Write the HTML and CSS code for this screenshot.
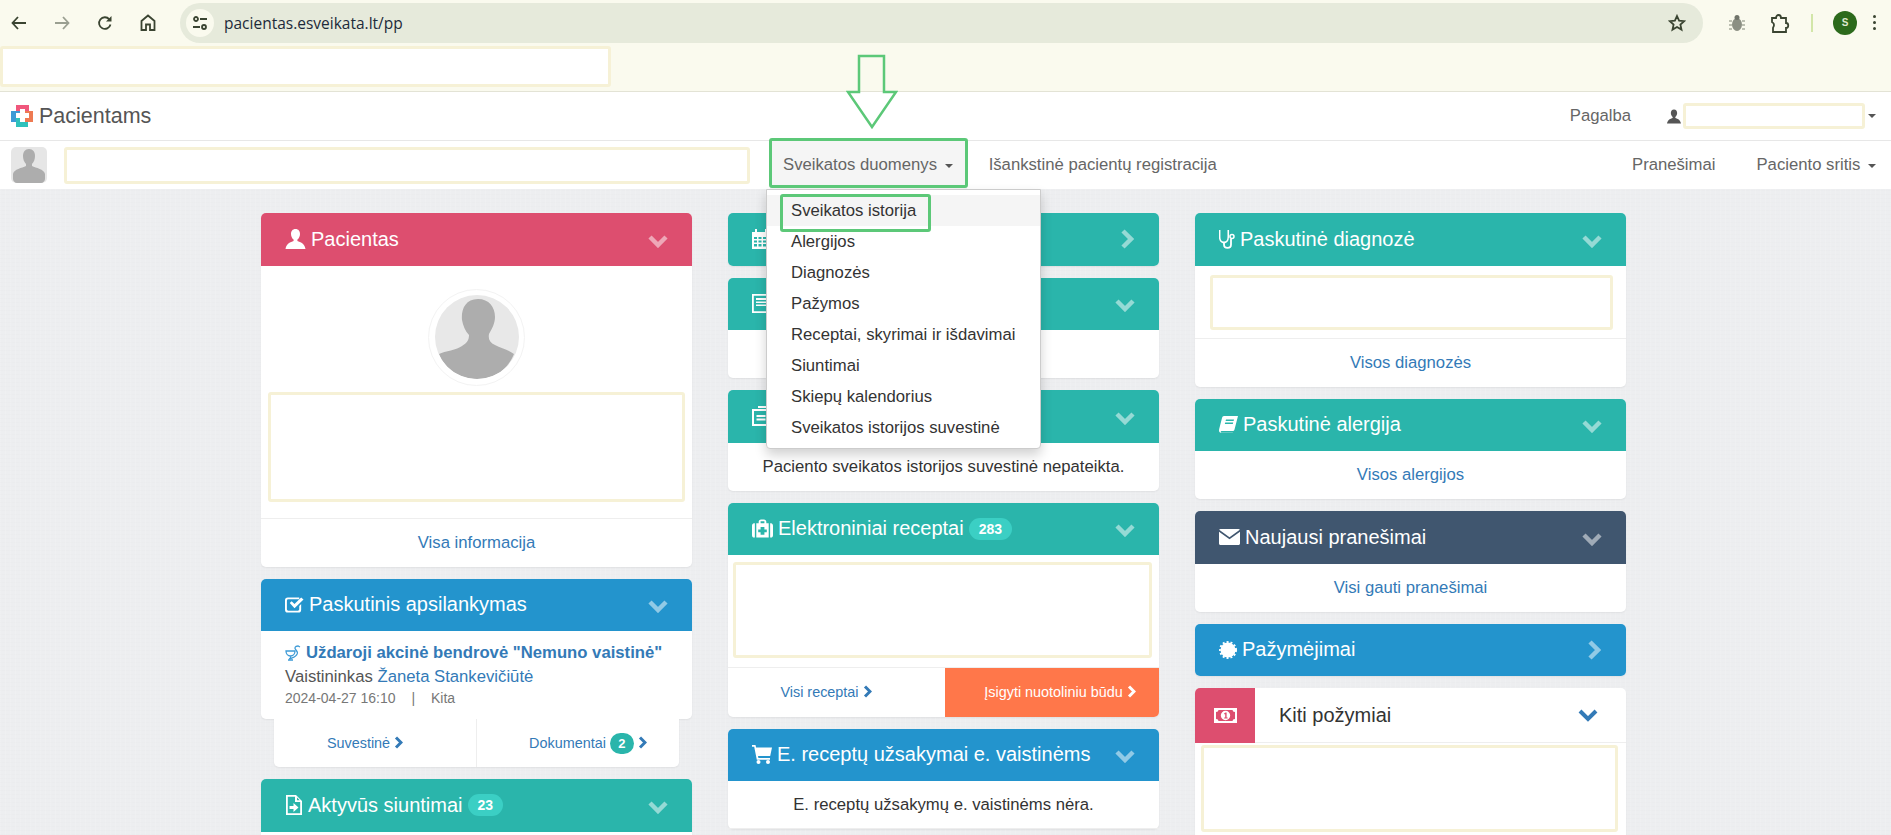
FILE: index.html
```html
<!DOCTYPE html>
<html lang="lt">
<head>
    <meta charset="UTF-8">
    <meta name="viewport" content="width=device-width, initial-scale=1.0">
    <title>Pacientams</title>
    <link rel="stylesheet" href="styles.css">
</head>
<body>
    <svg class="defs">
        <symbol id="i-user" viewBox="0 0 20 20"><path d="M10 0C7 0 5.500 2.300 5.500 5c0 2.500 1.200 4.600 2.600 5.600V12C5 13 1 14.500 0 20h20c-1-5.500-5-7-8.100-8v-1.400c1.400-1 2.600-3.100 2.600-5.600C14.500 2.300 13 0 10 0z"/></symbol>
        <symbol id="i-check" viewBox="0 0 20 18"><path d="M3 1h12v2H3.500A1.500 1.500 0 0 0 2 4.500v9A1.500 1.500 0 0 0 3.500 15h10a1.500 1.500 0 0 0 1.500-1.500V10l2-2v6a3 3 0 0 1-3 3H3a3 3 0 0 1-3-3V4a3 3 0 0 1 3-3z"/><path d="M5 7l2-2 3 3 7-7 2.500 2.200L10 12.500z"/></symbol>
        <symbol id="i-file" viewBox="0 0 18 20"><path d="M1 0h10l6 6v14H1zm1.800 1.800v16.400h12.400V7H10V1.800zM12 2.500V5.200h2.800z"/><path d="M4.500 11h4V8l5 4.500-5 4.500v-3h-4z"/></symbol>
        <symbol id="i-kit" viewBox="0 0 22 20"><path d="M7 4V2.500C7 1 8 0 9.500 0h3C14 0 15 1 15 2.500V4h-2V2H9v2zM0 6.500C0 5 1 4 2 4h1v15H2c-1 0-2-1-2-2.500zM19 4h1c1 0 2 1 2 2.500v10c0 1.500-1 2.500-2 2.500h-1zM4.500 4h13v15h-13zm4.500 4v2.500H6.500v3H9V16h4v-2.500h2.500v-3H13V8z" fill-rule="evenodd"/></symbol>
        <symbol id="i-cart" viewBox="0 0 20 19"><path d="M0 0h3.500l.6 2.500H20l-1.800 8.500H6l.4 2h11.600v1.800H4.800L2.200 1.800H0z"/><circle cx="6.500" cy="17" r="2"/><circle cx="16" cy="17" r="2"/></symbol>
        <symbol id="i-steth" viewBox="0 0 16 20"><path d="M1 1v7c0 3.500 2.500 5.500 5 5.500S11 11.500 11 8V1" transform="translate(-.2 0) scale(.86 1)" fill="none" stroke="currentColor" stroke-width="1.800"/><path d="M5 13v2.500c0 2 1.500 3.400 3.500 3.400s3.500-1.400 3.500-3.400V10" fill="none" stroke="currentColor" stroke-width="1.800"/><circle cx="13" cy="7.500" r="2" fill="none" stroke="currentColor" stroke-width="1.500"/></symbol>
        <symbol id="i-book" viewBox="0 0 19 17"><path d="M5 0h14l-3.500 13.500c-.3 1-1 1.500-2 1.500H3c-.8 0-1.300.4-1.300 .9s.5 .8 1.300 .8h11l-.3 .3H2.500C1 17 0 16 0 14.500c0-.5.100-1 .2-1.400L3 2c.3-1.200 1-2 2-2zm2 3.500l-.4 1.500h8l.4-1.500zm-.8 3l-.4 1.500h8l.4-1.500z" fill-rule="evenodd"/></symbol>
        <symbol id="i-mail" viewBox="0 0 21 16"><path d="M1.500 0h18c.6 0 1.100.3 1.300.8L10.500 8.200.2.800C.4.300.9 0 1.500 0zM0 2.800l10.500 7.500L21 2.800v11.700c0 .8-.7 1.500-1.500 1.500h-18C.7 16 0 15.300 0 14.500z"/></symbol>
        <symbol id="i-money" viewBox="0 0 23 15"><path d="M0 0h23v15H0zm4.500 2Q4.500 4 2 4v7q2.500 0 2.500 2h14q0-2 2.500-2V4q-2.500 0-2.500-2zm7 .8a4.700 4.700 0 1 1 0 9.400 4.700 4.700 0 0 1 0-9.400zM10.200 5.200v1h1v3.400h-1v1h3.400v-1h-1V4.600h-1z" fill-rule="evenodd"/></symbol>
        <symbol id="i-silhouette" viewBox="0 0 84 84"><path d="M4 59C10 56 22 55 27 51C32 48 34 45 34 40C30 36 28 30 27 25C26 15 30 4 43 4C54 4 60 12 60 22C60 28 57 34 54 39C53 44 55 48 60 50C66 53 74 55 79 59C73 74 60 84 42 84C25 84 10 74 4 59z"/></symbol>
        <symbol id="i-newspaper" viewBox="0 0 18 19"><path d="M0 0h18v19H0zm1.800 1.800v15.400h14.400V1.800zM4 4h10v2H4zm0 3.500h10v1.500H4zm0 3h10V12H4z" fill-rule="evenodd"/></symbol>
        <symbol id="i-chart" viewBox="0 0 18 20"><path d="M3 3h11v2H2v13h13v-7h2v9H0V3zM4.500 9h9v2h-9zm0 3.500h9v2h-9z"/><path d="M6 0h12v9h-2V2H6z"/></symbol>
        <symbol id="i-cal" viewBox="0 0 18 20"><path d="M0 3h3V0h2v3h8V0h2v3h3v17H0zm2 5v2h3V8zm4.500 0v2h3V8zm4.500 0v2h4V8zM2 11.500v2h3v-2zm4.500 0v2h3v-2zm4.500 0v2h4v-2zM2 15v2.500h3V15zm4.500 0v2.500h3V15zm4.500 0v2.500h4V15z" fill-rule="evenodd"/></symbol>
    </svg>

    <header class="toolbar">
        <span class="tool"><svg width="16" height="14" viewBox="0 0 16 14"><path d="M7 1L1.500 7 7 13M2 7h13" class="line"/></svg></span>
        <span class="tool tool-off"><svg width="16" height="14" viewBox="0 0 16 14"><path d="M9 1l5.500 6L9 13M14 7H1" class="line"/></svg></span>
        <span class="tool"><svg width="16" height="16" viewBox="0 0 16 16"><path d="M13.500 9.500a5.800 5.800 0 1 1-1.200-5.200" class="line"/><path d="M14.500 1v5.500H9z" fill="#3a4431"/></svg></span>
        <span class="tool"><svg width="16" height="17" viewBox="0 0 16 17"><path d="M1.500 7L8 1.500 14.500 7v9h-4.500v-5.500H6V16H1.500z" class="line"/></svg></span>
        <div class="omnibox">
            <span class="site-info"><svg width="16" height="14" viewBox="0 0 16 14"><circle cx="4" cy="3" r="2" class="line"/><path d="M8 3h7M1 11h7" class="line"/><circle cx="12" cy="11" r="2" class="line"/></svg></span>
            <span class="url">pacientas.esveikata.lt/pp</span>
            <svg class="star" width="18" height="18" viewBox="0 0 18 18"><path d="M9 2l2.100 4.700 5.100.5-3.800 3.400 1.100 5L9 13l-4.500 2.600 1.100-5-3.800-3.400 5.100-.5z" class="line"/></svg>
        </div>
        <svg class="bug" width="18" height="18" viewBox="0 0 18 18"><ellipse cx="9" cy="10.500" rx="5" ry="6.500" fill="#8b8f83"/><circle cx="9" cy="3.500" r="2.500" fill="#70746a"/><path d="M1 7h3M1 11h3M1 15h3M14 7h3M14 11h3M14 15h3" stroke="#a9ad9f" stroke-width="1.500"/></svg>
        <svg class="puzzle" width="20" height="20" viewBox="0 0 20 20"><path d="M2 5h4c0-4 5-4 5 0h5v5c3 0 3 5 0 5v4H3v-4c0-1 1-1 1-3s-1-2-2-3z" class="line"/></svg>
        <span class="tool-sep"></span>
        <span class="account">s</span>
        <span class="dots"><i></i><i></i><i></i></span>
    </header>

    <div class="infobar">
        <div class="hidden-box hidden-info"></div>
    </div>

    <nav class="topnav">
        <svg class="logo" width="22" height="22" viewBox="0 0 22 22">
            <rect x="5" y="0" width="13" height="11" fill="#f0577c"/>
            <rect x="0" y="6" width="10" height="11" fill="#3d9ad6"/>
            <rect x="5" y="12" width="12" height="10" fill="#2fc1bb"/>
            <rect x="12" y="6" width="10" height="11" fill="#ee7a52"/>
            <path d="M9 4h5v4h4v5h-4v4H9v-4H5V8h4z" fill="#fff"/>
        </svg>
        <span class="brand">Pacientams</span>
        <a class="nav-link help">Pagalba</a>
        <svg class="person" width="14" height="15"><use href="#i-user"></use></svg>
        <div class="hidden-box hidden-user"></div>
        <span class="caret"></span>
    </nav>

    <nav class="subnav">
        <svg class="mini-avatar" width="36" height="36" viewBox="0 0 36 36">
            <rect width="36" height="36" rx="5" fill="#e6e6e6"/>
            <path d="M18 2c4 0 6 3 6 7 0 3-1 6-3 8v2c4 2 12 3 13 8v5c0 2-2 4-4 4H6c-2 0-4-2-4-4v-5c1-5 9-6 13-8v-2c-2-2-3-5-3-8 0-4 2-7 6-7z" fill="#adadad"/>
        </svg>
        <div class="hidden-box hidden-patient"></div>
        <div class="nav-drop">
            <a class="nav-link drop-link">Sveikatos duomenys <span class="caret"></span></a>
            <ul class="menu">
                <li class="menu-current">Sveikatos istorija</li>
                <li>Alergijos</li>
                <li>Diagnozės</li>
                <li>Pažymos</li>
                <li>Receptai, skyrimai ir išdavimai</li>
                <li>Siuntimai</li>
                <li>Skiepų kalendorius</li>
                <li>Sveikatos istorijos suvestinė</li>
            </ul>
        </div>
        <a class="nav-link reg-link">Išankstinė pacientų registracija</a>
        <a class="nav-link msg-link">Pranešimai</a>
        <a class="nav-link area-link">Paciento sritis <span class="caret"></span></a>
    </nav>

    <main class="columns">
        <section class="column">
            <div class="card">
                <div class="card-head pink">
                    <svg class="icon" width="21" height="20"><use href="#i-user"></use></svg>
                    <span class="card-title">Pacientas</span>
                    <svg class="chev" width="20" height="14" viewBox="0 0 20 14"><path d="M2 3l8 8 8-8"/></svg>
                </div>
                <div class="patient-body">
                    <div class="avatar-ring">
                        <div class="avatar"><svg width="84" height="84" class="avatar-shape"><use href="#i-silhouette"></use></svg></div>
                    </div>
                    <div class="hidden-box hidden-patient-info"></div>
                </div>
                <a class="card-foot">Visa informacija</a>
            </div>

            <div class="card-group">
                <div class="card">
                    <div class="card-head blue">
                        <svg class="icon" width="19" height="18"><use href="#i-check"></use></svg>
                        <span class="card-title">Paskutinis apsilankymas</span>
                        <svg class="chev" width="20" height="14" viewBox="0 0 20 14"><path d="M2 3l8 8 8-8"/></svg>
                    </div>
                    <div class="visit">
                        <div class="visit-place">
                            <svg width="16" height="17" viewBox="0 0 16 17"><path d="M1 6h9c0 3-2 5-4.500 5S1 9 1 6zM5.500 11v3M3 15h5" fill="none" stroke="#3d9ad6" stroke-width="1.300"/><path d="M4 14C12 12 14 8 11 5C9 3 10 1 13 1l2 1" fill="none" stroke="#3d9ad6" stroke-width="1.300"/></svg>
                            <a>Uždaroji akcinė bendrovė "Nemuno vaistinė"</a>
                        </div>
                        <div class="visit-doc">Vaistininkas <a>Žaneta Stankevičiūtė</a></div>
                        <div class="visit-meta">2024-04-27 16:10 <span class="meta-sep">|</span> Kita</div>
                    </div>
                </div>
                <div class="sub-row">
                    <a class="sub-link sub-summary">Suvestinė <svg class="chev-small" width="9" height="13" viewBox="0 0 9 13"><path d="M2 1.500l5 5-5 5"/></svg></a>
                    <a class="sub-link sub-docs">Dokumentai <span class="count">2</span> <svg class="chev-small" width="9" height="13" viewBox="0 0 9 13"><path d="M2 1.500l5 5-5 5"/></svg></a>
                </div>
            </div>

            <div class="card">
                <div class="card-head teal">
                    <svg class="icon" width="18" height="20"><use href="#i-file"></use></svg>
                    <span class="card-title">Aktyvūs siuntimai</span>
                    <span class="badge">23</span>
                    <svg class="chev" width="20" height="14" viewBox="0 0 20 14"><path d="M2 3l8 8 8-8"/></svg>
                </div>
                <div class="card-rest"></div>
            </div>
        </section>

        <section class="column">
            <div class="card">
                <div class="card-head teal head-only">
                    <svg class="icon" width="18" height="20"><use href="#i-cal"></use></svg>
                    <svg class="chev chev-right" width="14" height="20" viewBox="0 0 14 20"><path d="M3 2l8 8-8 8"/></svg>
                </div>
            </div>
            <div class="card">
                <div class="card-head teal">
                    <svg class="icon" width="18" height="19"><use href="#i-newspaper"></use></svg>
                    <svg class="chev" width="20" height="14" viewBox="0 0 20 14"><path d="M2 3l8 8 8-8"/></svg>
                </div>
                <div class="empty-body"></div>
            </div>
            <div class="card">
                <div class="card-head teal">
                    <svg class="icon" width="18" height="20"><use href="#i-chart"></use></svg>
                    <svg class="chev" width="20" height="14" viewBox="0 0 20 14"><path d="M2 3l8 8 8-8"/></svg>
                </div>
                <p class="card-text text-summary">Paciento sveikatos istorijos suvestinė nepateikta.</p>
            </div>
            <div class="card">
                <div class="card-head teal">
                    <svg class="icon" width="21" height="20"><use href="#i-kit"></use></svg>
                    <span class="card-title">Elektroniniai receptai</span>
                    <span class="badge">283</span>
                    <svg class="chev" width="20" height="14" viewBox="0 0 20 14"><path d="M2 3l8 8 8-8"/></svg>
                </div>
                <div class="rx-body">
                    <div class="hidden-box hidden-rx"></div>
                </div>
                <div class="rx-foot">
                    <a class="rx-link">Visi receptai <svg class="chev-small" width="9" height="13" viewBox="0 0 9 13"><path d="M2 1.500l5 5-5 5"/></svg></a>
                    <a class="rx-buy">Įsigyti nuotoliniu būdu <svg class="chev-small" width="9" height="13" viewBox="0 0 9 13"><path d="M2 1.500l5 5-5 5"/></svg></a>
                </div>
            </div>
            <div class="card">
                <div class="card-head blue">
                    <svg class="icon" width="20" height="19"><use href="#i-cart"></use></svg>
                    <span class="card-title">E. receptų užsakymai e. vaistinėms</span>
                    <svg class="chev" width="20" height="14" viewBox="0 0 20 14"><path d="M2 3l8 8 8-8"/></svg>
                </div>
                <p class="card-text text-orders">E. receptų užsakymų e. vaistinėms nėra.</p>
            </div>
        </section>

        <section class="column">
            <div class="card">
                <div class="card-head teal">
                    <svg class="icon" width="16" height="20"><use href="#i-steth"></use></svg>
                    <span class="card-title">Paskutinė diagnozė</span>
                    <svg class="chev" width="20" height="14" viewBox="0 0 20 14"><path d="M2 3l8 8 8-8"/></svg>
                </div>
                <div class="diag-body">
                    <div class="hidden-box hidden-diag"></div>
                </div>
                <a class="card-foot">Visos diagnozės</a>
            </div>
            <div class="card">
                <div class="card-head teal">
                    <svg class="icon" width="19" height="17"><use href="#i-book"></use></svg>
                    <span class="card-title">Paskutinė alergija</span>
                    <svg class="chev" width="20" height="14" viewBox="0 0 20 14"><path d="M2 3l8 8 8-8"/></svg>
                </div>
                <a class="card-foot no-line">Visos alergijos</a>
            </div>
            <div class="card">
                <div class="card-head navy">
                    <svg class="icon" width="21" height="16"><use href="#i-mail"></use></svg>
                    <span class="card-title">Naujausi pranešimai</span>
                    <svg class="chev" width="20" height="14" viewBox="0 0 20 14"><path d="M2 3l8 8 8-8"/></svg>
                </div>
                <a class="card-foot no-line">Visi gauti pranešimai</a>
            </div>
            <div class="card">
                <div class="card-head blue head-only">
                    <svg class="icon" width="18" height="18" viewBox="0 0 18 18"><circle cx="9" cy="9" r="7.500"/><circle cx="9" cy="9" r="8" fill="none" stroke="#fff" stroke-width="2" stroke-dasharray="2 2"/></svg>
                    <span class="card-title">Pažymėjimai</span>
                    <svg class="chev chev-right" width="14" height="20" viewBox="0 0 14 20"><path d="M3 2l8 8-8 8"/></svg>
                </div>
            </div>
            <div class="card">
                <div class="side-head">
                    <span class="side-icon"><svg class="icon" width="23" height="15"><use href="#i-money"></use></svg></span>
                    <span class="side-title">Kiti požymiai</span>
                    <svg class="chev-blue" width="20" height="14" viewBox="0 0 20 14"><path d="M2 3l8 8 8-8"/></svg>
                </div>
                <div class="signs-body">
                    <div class="hidden-box hidden-signs"></div>
                </div>
            </div>
        </section>
    </main>

    <!-- green marks drawn over the screenshot -->
    <svg class="mark-arrow" width="52" height="76" viewBox="0 0 52 76"><path d="M13 2h25v36h12L26 73 2 38h11z"/></svg>
    <div class="mark-box mark-nav"></div>
    <div class="mark-box mark-item"></div>
</body>
</html>
```

FILE: styles.css
```css
html, body {
    height: 835px;
    overflow: hidden;
}
body {
    position: relative;
    margin: 0;
    font-family: "Liberation Sans", Arial, sans-serif;
    font-size: 16.7px;
    color: #333;
    background-color: #edeef0;
    background-image:
        repeating-linear-gradient(90deg, rgba(255,255,255,.1) 0 1px, transparent 1px 5px),
        repeating-linear-gradient(0deg, rgba(0,0,0,.006) 0 1px, transparent 1px 4px);
}
a {
    color: #337ab7;
    text-decoration: none;
}
.defs {
    display: none;
}
.line {
    fill: none;
    stroke: #3a4431;
    stroke-width: 1.8;
}

/* browser bars */
.toolbar {
    display: flex;
    align-items: center;
    height: 45px;
    padding-left: 1px;
    background: #fafaee;
}
.tool {
    display: flex;
    justify-content: center;
    width: 36px;
    margin-right: 7px;
}
.tool-off .line {
    stroke: #9a9f91;
}
.omnibox {
    display: flex;
    align-items: center;
    width: 1523px;
    height: 40px;
    margin-left: 7px;
    border-radius: 20px;
    background: #e6eadb;
}
.site-info {
    display: flex;
    align-items: center;
    justify-content: center;
    width: 28px;
    height: 28px;
    margin-left: 6px;
    border-radius: 50%;
    background: #fafaee;
}
.url {
    margin-left: 10px;
    font-family: "Open Sans", "Liberation Sans", sans-serif;
    font-size: 15.5px;
    color: #1d2a3a;
}
.star {
    margin-left: auto;
    margin-right: 17px;
}
.bug {
    margin-left: 25px;
}
.puzzle {
    margin-left: 24px;
}
.tool-sep {
    width: 2px;
    height: 18px;
    margin-left: 21px;
    background: #d2e6a8;
}
.account {
    width: 24px;
    height: 24px;
    margin-left: 20px;
    border-radius: 50%;
    background: #2c6a1c;
    color: #dfe8cf;
    font-size: 10px;
    font-weight: bold;
    line-height: 24px;
    text-align: center;
    text-transform: uppercase;
}
.dots {
    display: flex;
    flex-direction: column;
    gap: 3px;
    margin-left: 16px;
}
.dots i {
    width: 3px;
    height: 3px;
    border-radius: 50%;
    background: #3a4431;
}
.infobar {
    height: 47px;
    box-sizing: border-box;
    padding-top: 1px;
    border-bottom: 1px solid #e3e3d5;
    background: #fafaee;
}

/* covered-up personal data */
.hidden-box {
    box-sizing: border-box;
    border: 3px solid #f6f1d6;
    border-radius: 3px;
    background: #fff;
}
.hidden-info {
    width: 611px;
    height: 41px;
}
.hidden-user {
    width: 182px;
    height: 26px;
    margin-left: 2px;
}
.hidden-patient {
    width: 686px;
    height: 37px;
    margin-left: 17px;
}
.hidden-patient-info {
    width: 417px;
    height: 110px;
    margin-top: 6px;
}
.hidden-rx {
    width: 419px;
    height: 96px;
}
.hidden-diag {
    width: 403px;
    height: 55px;
}
.hidden-signs {
    width: 417px;
    height: 87px;
}

/* site navigation */
.topnav, .subnav {
    display: flex;
    align-items: center;
    height: 48px;
    border-bottom: 1px solid #e7e7e7;
    background: #fff;
}
.subnav {
    border-bottom: 0;
}
.logo {
    margin-left: 11px;
}
.brand {
    margin-left: 6px;
    font-size: 21.5px;
    color: #555;
}
.nav-link {
    color: #666;
}
.help {
    margin-left: auto;
}
.person {
    margin-left: 36px;
    fill: #555;
}
.caret {
    display: inline-block;
    width: 0;
    height: 0;
    margin-left: 3px;
    border-top: 4px solid #555;
    border-left: 4px solid transparent;
    border-right: 4px solid transparent;
    vertical-align: middle;
}
.topnav > .caret {
    margin-right: 15px;
}
.mini-avatar {
    margin-left: 11px;
}
.nav-drop {
    position: relative;
    margin-left: 20px;
}
.drop-link {
    display: block;
    height: 48px;
    box-sizing: border-box;
    padding: 0 14px 0 13px;
    background: #f5f5f5;
    line-height: 48px;
}
.menu {
    position: absolute;
    top: 48px;
    left: -4px;
    z-index: 5;
    box-sizing: border-box;
    width: 275px;
    margin: 0;
    padding: 5px 0;
    border: 1px solid #ccc;
    border-radius: 0 0 4px 4px;
    background: #fff;
    box-shadow: 0 6px 12px rgba(0,0,0,.18);
    list-style: none;
}
.menu li {
    height: 31px;
    padding-left: 24px;
    line-height: 31px;
    color: #333;
}
.menu-current {
    background: #f5f5f5;
}
.reg-link {
    margin-left: 22px;
}
.msg-link {
    margin-left: auto;
}
.area-link {
    margin-left: 41px;
    margin-right: 15px;
}

/* dashboard columns */
.columns {
    display: flex;
    gap: 36px;
    padding: 24px 0 0 261px;
}
.column {
    display: flex;
    flex-direction: column;
    gap: 12px;
    width: 431px;
}
.card {
    border-radius: 5px;
    background: #fff;
    box-shadow: 0 1px 2px rgba(0,0,0,.06);
}
.card-head {
    display: flex;
    align-items: center;
    box-sizing: border-box;
    height: 52.5px;
    padding: 0 24px;
    border-radius: 5px 5px 0 0;
    color: #fff;
}
.head-only {
    border-radius: 5px;
}
.pink { background: #dd4e6f; }
.blue { background: #2394cd; }
.teal { background: #2ab5ab; }
.navy { background: #40566f; }
.icon {
    flex: none;
    fill: #fff;
}
.card-title {
    margin-left: 5px;
    font-size: 20px;
    white-space: nowrap;
}
.badge {
    margin-left: 5px;
    padding: 0 10px;
    border-radius: 11px;
    background: #3bcfc4;
    font-size: 14px;
    font-weight: bold;
    line-height: 22px;
}
.chev {
    flex: none;
    margin-top: 3px;
    margin-left: auto;
    fill: none;
    stroke: rgba(255,255,255,.5);
    stroke-width: 4.5;
}
.chev-right {
    margin-top: 0;
    margin-right: 1px;
}
.chev-small {
    fill: none;
    stroke: currentColor;
    stroke-width: 3;
    vertical-align: -1px;
}
.card-foot {
    display: block;
    height: 48px;
    border-top: 1px solid #eee;
    line-height: 48px;
    text-align: center;
}
.no-line {
    border-top: 0;
}
.card-text {
    margin: 0;
    text-align: center;
}
.text-summary {
    height: 48px;
    line-height: 47px;
}
.text-orders {
    height: 47px;
    border-bottom: 1px solid #eee;
    line-height: 47px;
}
.empty-body {
    height: 48px;
}
.card-rest {
    height: 60px;
}

/* Pacientas */
.patient-body {
    display: flex;
    flex-direction: column;
    align-items: center;
    height: 252px;
    box-sizing: border-box;
    padding-top: 23px;
}
.avatar-ring {
    display: flex;
    align-items: center;
    justify-content: center;
    box-sizing: border-box;
    width: 97px;
    height: 97px;
    border: 1px solid #f3f3f3;
    border-radius: 50%;
}
.avatar {
    width: 84px;
    height: 84px;
    overflow: hidden;
    border-radius: 50%;
    background: #e8e8e8;
}
.avatar-shape {
    display: block;
    fill: #adadad;
}

/* Paskutinis apsilankymas */
.card-group {
    display: flex;
    flex-direction: column;
}
.visit {
    height: 88px;
    box-sizing: border-box;
    padding: 10px 0 0 24px;
}
.visit-place {
    display: flex;
    align-items: center;
    gap: 5px;
    height: 24px;
    font-weight: bold;
    white-space: nowrap;
}
.visit-doc {
    height: 23px;
    line-height: 24px;
    color: #555;
}
.visit-meta {
    font-size: 14px;
    line-height: 20px;
    color: #777;
}
.meta-sep {
    margin: 0 12px;
}
.sub-row {
    display: flex;
    align-items: center;
    height: 48px;
    margin: 0 13px;
    border-radius: 0 0 5px 5px;
    background: #fff;
    box-shadow: 0 1px 2px rgba(0,0,0,.06);
}
.sub-link {
    flex: 1 1 0;
    height: 48px;
    font-size: 14.4px;
    line-height: 48px;
    text-align: center;
}
.sub-summary {
    padding-right: 20px;
}
.sub-docs {
    padding-left: 20px;
    border-left: 1px solid #eee;
}
.count {
    display: inline-block;
    width: 24px;
    border-radius: 11px;
    background: #2ab5ab;
    color: #fff;
    font-weight: bold;
    font-size: 13px;
    line-height: 21px;
}

/* Elektroniniai receptai */
.rx-body {
    height: 112.5px;
    box-sizing: border-box;
    padding: 7px 0 0 5px;
    border-bottom: 1px solid #eee;
}
.rx-foot {
    display: flex;
    height: 49px;
    font-size: 14.4px;
    line-height: 49px;
}
.rx-link {
    box-sizing: border-box;
    width: 217px;
    padding-right: 21px;
    text-align: center;
}
.rx-buy {
    flex: 1;
    padding-left: 16px;
    border-radius: 0 0 5px 0;
    background: #ff774a;
    color: #fff;
    text-align: center;
}

/* Paskutinė diagnozė */
.diag-body {
    height: 72px;
    box-sizing: border-box;
    padding: 9px 0 0 15px;
}

/* Kiti požymiai */
.side-head {
    display: flex;
    align-items: center;
    height: 54px;
    border-bottom: 1px solid #eee;
}
.side-icon {
    display: flex;
    align-items: center;
    justify-content: center;
    width: 60px;
    height: 55px;
    border-radius: 5px 0 0 0;
    background: #dd4e6f;
}
.side-title {
    margin-left: 24px;
    font-size: 20px;
}
.chev-blue {
    margin-left: auto;
    margin-right: 28px;
    fill: none;
    stroke: #337ab7;
    stroke-width: 4;
}
.signs-body {
    height: 100px;
    box-sizing: border-box;
    padding: 2px 0 0 6px;
}

/* annotations */
.mark-arrow {
    position: absolute;
    top: 54px;
    left: 846px;
    fill: none;
    stroke: #5cc878;
    stroke-width: 2.5;
}
.mark-box {
    position: absolute;
    box-sizing: border-box;
    z-index: 6;
    border: 3px solid #5cc878;
    border-radius: 3px;
}
.mark-nav {
    top: 138px;
    left: 769px;
    width: 199px;
    height: 50px;
}
.mark-item {
    top: 194px;
    left: 780px;
    width: 151px;
    height: 38px;
}
```
